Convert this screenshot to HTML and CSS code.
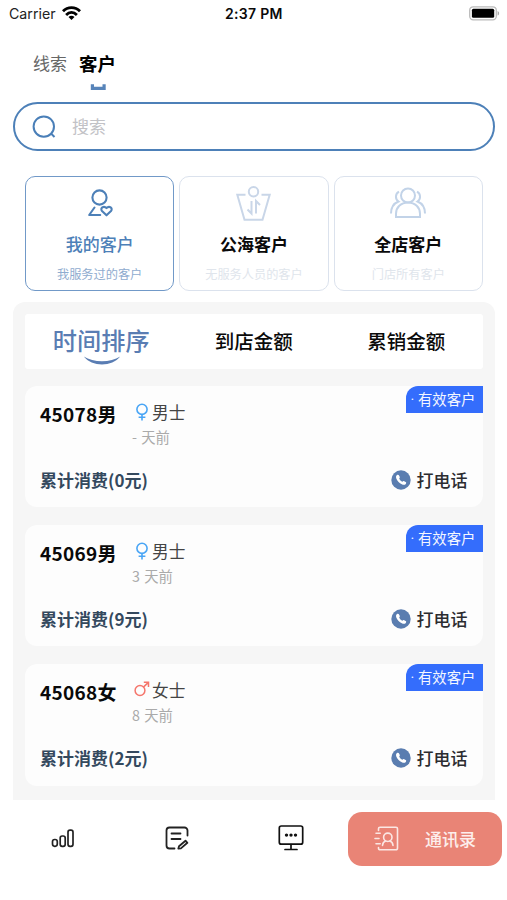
FILE: index.html
```
<!DOCTYPE html>
<html lang="zh-CN">
<head>
<meta charset="utf-8">
<title>客户</title>
<link rel="stylesheet" href="styles.css">
</head>
<body>
<svg class="defs" width="0" height="0" aria-hidden="true">
  <symbol id="phone" viewBox="0 0 20 20">
    <circle cx="10" cy="10" r="9.7" fill="#5a7db0"/>
    <path d="M6 5.1c.7-.6 1.5-.5 1.9.2l.8 1.5c.3.6.1 1-.5 1.6.5 1.5 1.700 2.700 3.300 3.300.6-.7 1.100-.8 1.700-.5l1.400.8c.7.4.8 1.200.2 1.900-.9 1.100-2.300 1.200-4 .4C8.300 13.200 6.500 11.300 5.400 8.800 4.800 7.200 4.900 6 6 5.100z" fill="#fff"/>
  </symbol>
  <symbol id="male" viewBox="0 0 14 18">
    <g fill="none" stroke="#49a5f5" stroke-width="1.600"><circle cx="7" cy="6.300" r="5.100"/><path d="M7 11.400v6M3.600 14.300h6.800"/></g>
  </symbol>
  <symbol id="female" viewBox="0 0 16 16">
    <g fill="none" stroke="#f5766c" stroke-width="1.500"><circle cx="6" cy="9.500" r="4.900"/><path d="M9.400 6.100l5-4.700M9.800 1.300h4.700v4.700"/></g>
  </symbol>
</svg>

<header class="status">
  <span class="carrier">Carrier</span>
  <svg class="wifi" width="19" height="14" viewBox="0 0 19 14"><g fill="none" stroke="#000" stroke-width="2.800"><path d="M1 5.300C5.800.4 13.200.4 18 5.300"/><path d="M4.100 8.900c3.200-3.200 7.600-3.200 10.800 0"/></g><path d="M6.500 11c1.800-1.700 4.200-1.700 6 0L9.500 13.900z"/></svg>
  <span class="time">2:37 PM</span>
  <svg class="battery" width="31" height="15" viewBox="0 0 31 15"><rect x=".7" y=".8" width="26.600" height="13" rx="3.500" fill="#fff" stroke="#bbb" stroke-width="1.300"/><rect x="2.900" y="2.800" width="22.300" height="9" rx="1.500"/><path d="M28.600 5v4.600c2-.8 2-3.800 0-4.600z" fill="#aaa"/></svg>
</header>

<nav class="top-tabs">
  <span class="top-tab">线索</span>
  <span class="top-tab active">客户<svg class="mark" width="16" height="8" viewBox="0 0 16 8"><path d="M.8 1.200H4v2.500h8.500V1.200h3.200V7H.8z" fill="#5784b9"/></svg></span>
</nav>

<label class="search">
  <svg width="26" height="26" viewBox="0 0 26 26" fill="none" stroke="#4a7fb8" stroke-width="2"><circle cx="12.800" cy="12.600" r="10.200"/><path d="M20 19.500l3.500 3.500"/></svg>
  <span>搜索</span>
</label>

<section class="scopes">
  <div class="scope selected">
    <svg width="40" height="40" viewBox="0 0 40 40" fill="none" stroke="#4d80b8" stroke-width="2.100" stroke-linejoin="round" stroke-linecap="round"><circle cx="19.500" cy="13.500" r="7.100"/><path d="M14.500 23.500L9.200 31h11"/><path d="M26.500 31.300l-4.500-4.300c-2.300-2.700 1.700-5.800 4.500-2.900 2.800-2.900 6.800.2 4.500 2.900z"/></svg>
    <h2>我的客户</h2>
    <p>我服务过的客户</p>
  </div>
  <div class="scope">
    <svg width="40" height="40" viewBox="0 0 40 40" fill="none" stroke="#c9d6e8" stroke-width="2"><circle cx="19.500" cy="7.700" r="4.700"/><path d="M11.500 10.800H3.300L10.500 35.700h18l7.200-24.900h-8.200"/><path d="M17.500 17v12.500l-4-4M22 29.500V17l4 4"/></svg>
    <h2>公海客户</h2>
    <p>无服务人员的客户</p>
  </div>
  <div class="scope">
    <svg width="40" height="40" viewBox="0 0 40 40" fill="none" stroke="#c2d3e8" stroke-width="2"><circle cx="20" cy="11.500" r="7"/><path d="M8 33v-3.300c0-6.200 4.800-11.200 12-11.200s12 5 12 11.200V33z"/><path d="M11 7.700c-4 2.200-4 7.300-.5 9.800C5.500 19.500 3 23.500 3 29.500M29 7.700c4 2.200 4 7.300.5 9.800 5 2 7.500 6 7.500 12"/></svg>
    <h2>全店客户</h2>
    <p>门店所有客户</p>
  </div>
</section>

<main class="panel">
  <nav class="sorts">
    <span class="sort current">时间排序<svg class="smile" width="38" height="9" viewBox="0 0 38 9"><path d="M.8.500c9.500 6.300 26.900 6.300 36.400 0-8 10.500-28.400 10.500-36.400 0z" fill="#5a7db3"/></svg></span>
    <span class="sort">到店金额</span>
    <span class="sort">累销金额</span>
  </nav>

  <article class="customer">
    <div class="who">
      <h3>45078男</h3>
      <div class="info"><div class="gender"><svg class="male"><use href="#male"/></svg>男士</div><div class="ago">- 天前</div></div>
    </div>
    <div class="foot"><span class="spent">累计消费(0元)</span><span class="call"><svg><use href="#phone"/></svg>打电话</span></div>
    <span class="badge"><i>·</i>有效客户</span>
  </article>

  <article class="customer">
    <div class="who">
      <h3>45069男</h3>
      <div class="info"><div class="gender"><svg class="male"><use href="#male"/></svg>男士</div><div class="ago">3 天前</div></div>
    </div>
    <div class="foot"><span class="spent">累计消费(9元)</span><span class="call"><svg><use href="#phone"/></svg>打电话</span></div>
    <span class="badge"><i>·</i>有效客户</span>
  </article>

  <article class="customer">
    <div class="who">
      <h3>45068女</h3>
      <div class="info"><div class="gender"><svg class="female"><use href="#female"/></svg>女士</div><div class="ago">8 天前</div></div>
    </div>
    <div class="foot"><span class="spent">累计消费(2元)</span><span class="call"><svg><use href="#phone"/></svg>打电话</span></div>
    <span class="badge"><i>·</i>有效客户</span>
  </article>
</main>

<footer class="tabbar">
  <span class="item"><svg width="28" height="28" viewBox="0 0 28 28" fill="none" stroke="#222" stroke-width="1.700"><rect x="3.500" y="15.500" width="4.800" height="6.800" rx="2.200"/><rect x="11.200" y="12" width="5" height="10.300" rx="2"/><rect x="19" y="6.200" width="5" height="16.100" rx="2"/></svg></span>
  <span class="item"><svg width="28" height="28" viewBox="0 0 28 28" fill="none" stroke="#222" stroke-width="1.800" stroke-linecap="round"><path d="M24.500 11.500V6.500a3 3 0 0 0-3-3h-15a3 3 0 0 0-3 3v15a3 3 0 0 0 3 3h5M8.500 9.500h9M8.500 15h9"/><path d="M16 22.300l6.500-5.600 1.900 2.100-6.500 5.600-2.600.300z" stroke-linejoin="round"/></svg></span>
  <span class="item"><svg width="28" height="28" viewBox="0 0 28 28" fill="none" stroke="#111" stroke-width="1.700" stroke-linecap="round"><rect x="2.300" y="2" width="23.400" height="18.200" rx="2"/><path d="M14 20.500v5M8 25.500h12"/><g fill="#111" stroke="none"><circle cx="9.500" cy="11.100" r="1.700"/><circle cx="14" cy="11.100" r="1.700"/><circle cx="18.500" cy="11.100" r="1.700"/></g></svg></span>
  <span class="contacts"><svg width="28" height="28" viewBox="0 0 28 28" fill="none" stroke="#fbe7e4" stroke-width="1.600" stroke-linecap="round"><path d="M5.500 5.500v-1.800a1.500 1.500 0 0 1 1.500-1.500h16a1.500 1.500 0 0 1 1.500 1.500v19.600a1.500 1.500 0 0 1-1.500 1.500H7a1.500 1.500 0 0 1-1.500-1.500v-.8M3 8.300h4.200M2 13.500h4M3 18.700h4.200"/><circle cx="14.800" cy="12.300" r="4.200"/><path d="M9.500 20.500c.2-2.600 1.500-4.100 3.200-4.500M16.800 16c1.800.5 3 2 3.200 4.500"/></svg><b>通讯录</b></span>
</footer>
</body>
</html>
```

FILE: styles.css
```
* { box-sizing: border-box; }
body {
  margin: 0;
  height: 900px;
  overflow: hidden;
  background: #fff;
  color: #0a0a0a;
  font-family: "Noto Sans CJK SC", sans-serif;
}
h2, h3, p { margin: 0; }
svg { display: block; flex: none; }
.defs { position: absolute; }

.status {
  display: grid;
  grid-template-columns: 53px 163px 1fr 31px;
  align-items: center;
  height: 28px;
  padding: 0 7px 0 9px;
  font: 15px/28px Inter, sans-serif;
}
.carrier { font-size: 14.200px; color: #222; }
.time { font-size: 14px; font-weight: 600; letter-spacing: .3px; }
.battery, .wifi { margin-top: -2px; }

.top-tabs { display: flex; gap: 12px; height: 74px; padding: 22px 33px 0; line-height: 26px; }
.top-tab { font-size: 17px; color: #666; }
.top-tab.active { display: flex; flex-direction: column; align-items: center; height: 41px; font-size: 18.500px; font-weight: 700; color: #000; }
.mark { margin: 7px 0 0 1px; }

.search {
  display: flex;
  align-items: center;
  gap: 15px;
  height: 49px;
  margin: 0 12.500px 0 13px;
  padding: 0 16px;
  border: 2px solid #4d80b8;
  border-radius: 25px;
  font-size: 17px;
  color: #c2c2c6;
}
.search span { margin-top: -2px; }

.scopes { display: grid; grid-template-columns: repeat(3, 1fr); gap: 5px; margin: 24.500px 24px 0 25px; }
.scope {
  display: flex;
  flex-direction: column;
  align-items: center;
  height: 115px;
  padding-top: 7px;
  border: 1.500px solid #dbe2ed;
  border-radius: 10px;
}
.scope h2 { margin-top: 7px; font-size: 17px; line-height: 26px; font-weight: 700; }
.scope p { margin-top: 8px; font-size: 12.200px; line-height: 18px; color: #e0e5ec; }
.scope.selected { border-color: #7199c8; }
.selected h2 { color: #4d80b8; font-weight: 500; }
.scope.selected p { color: #8faccf; }

.panel { height: 497.500px; margin: 11.500px 12.500px 0 13px; padding: 12px 12px 0; background: #f6f6f6; border-radius: 12px 12px 0 0; }
.sorts { display: grid; grid-template-columns: repeat(3, 1fr); height: 55px; margin-bottom: 17px; background: #fff; border-radius: 3px; }
.sort { text-align: center; font-size: 19.500px; line-height: 54px; font-weight: 500; }
.sort.current { display: flex; flex-direction: column; align-items: center; font-size: 24.200px; line-height: 52px; color: #5a7db3; }
.smile { margin: -10px 0 0 2px; }

.customer { position: relative; height: 121.200px; margin-bottom: 18px; padding: 14px 15px 0; background: #fdfdfd; border-radius: 12px; }
.who { display: flex; height: 66px; }
.who h3 { width: 92px; font-size: 19px; line-height: 28px; font-weight: 700; letter-spacing: .300px; white-space: nowrap; }
.info { margin-top: -1px; }
.gender { display: flex; align-items: center; height: 26px; font-size: 16.700px; color: #444; }
.male { width: 14px; height: 18px; margin: -1px 3px 0 3px; }
.female { width: 16px; height: 16px; margin: -2px 2px 0 2px; }
.ago { font-size: 14.300px; line-height: 23px; word-spacing: 1px; color: #aaa; }
.foot { display: flex; justify-content: space-between; line-height: 28px; font-size: 17px; font-weight: 500; }
.spent { color: #34495e; font-weight: 700; }
.call { display: flex; align-items: center; gap: 6px; color: #2c2c30; }
.call svg { width: 20px; height: 20px; }
.badge { position: absolute; top: 0; right: 0; display: flex; justify-content: space-between; width: 77px; height: 26.500px; padding: 0 7px 0 5px; border-radius: 12px 0 0 0; background: #346dfc; color: #f4f7ff; font-size: 14.400px; line-height: 25px; white-space: nowrap; }
.badge i { padding-top: 2px; font-family: Roboto, sans-serif; font-style: normal; }

.tabbar { display: grid; grid-template-columns: 114px 114px 114px 154px; height: 100px; padding: 12px 0 0 6px; }
.item { display: flex; justify-content: center; align-items: center; height: 53px; }
.contacts { display: flex; align-items: center; height: 54px; padding-left: 25px; gap: 24px; border-radius: 14px; background: #e98476; color: #fdeeec; }
.contacts b { font-size: 17px; font-weight: 500; }
```
